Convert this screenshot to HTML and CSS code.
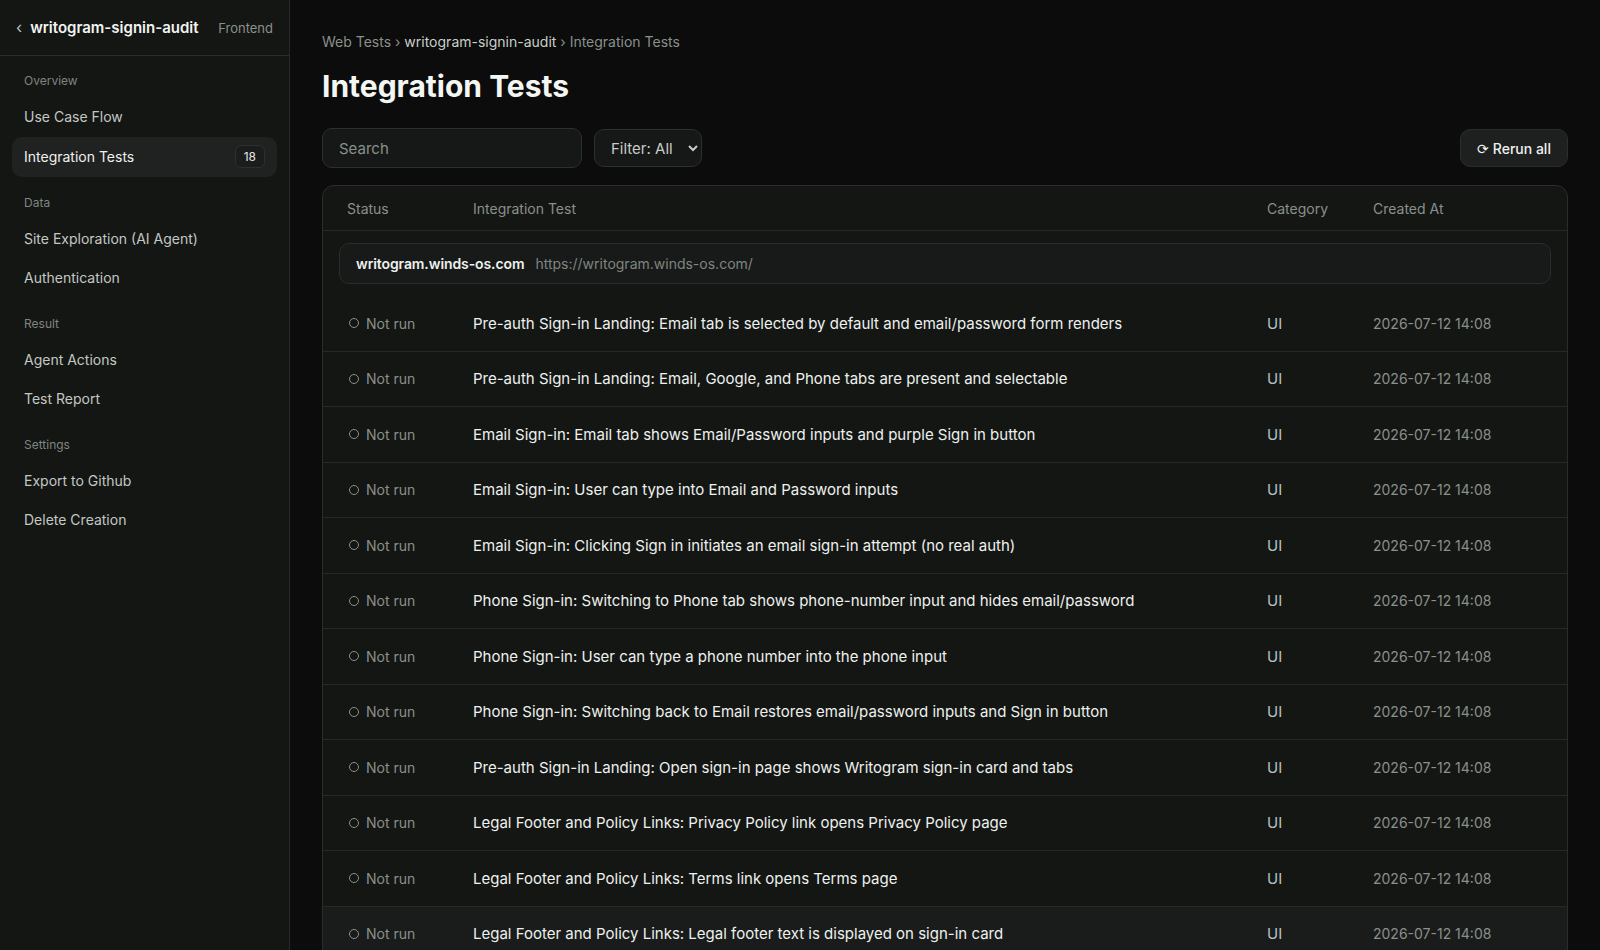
FILE: index.html
```html
<!DOCTYPE html>
<html lang="en">
<head>
  <meta charset="UTF-8">
  <meta name="viewport" content="width=device-width, initial-scale=1.0">
  <title>Integration Tests - writogram-signin-audit</title>
  <link rel="stylesheet" href="styles.css">
</head>
<body>
  <aside class="sidebar">
    <div class="sidebar-head">
      <span class="back">&#8249;</span>
      <span class="project">writogram-signin-audit</span>
      <span class="kind">Frontend</span>
    </div>
    <nav class="nav">
      <div class="nav-label">Overview</div>
      <a class="nav-item">Use Case Flow</a>
      <a class="nav-item active">Integration Tests <span class="badge">18</span></a>

      <div class="nav-label">Data</div>
      <a class="nav-item">Site Exploration (AI Agent)</a>
      <a class="nav-item">Authentication</a>

      <div class="nav-label">Result</div>
      <a class="nav-item">Agent Actions</a>
      <a class="nav-item">Test Report</a>

      <div class="nav-label">Settings</div>
      <a class="nav-item">Export to Github</a>
      <a class="nav-item">Delete Creation</a>
    </nav>
  </aside>

  <main class="main">
    <div class="crumbs">Web Tests › <span class="crumb-strong">writogram-signin-audit</span> › Integration Tests</div>
    <h1>Integration Tests</h1>

    <div class="toolbar">
      <input class="search" type="text" placeholder="Search">
      <select class="filter">
        <option>Filter: All</option>
        <option>Filter: Passed</option>
        <option>Filter: Failed</option>
        <option>Filter: Not run</option>
      </select>
      <button class="rerun">⟳ Rerun all</button>
    </div>

    <div class="table">
      <div class="row head">
        <div>Status</div>
        <div>Integration Test</div>
        <div>Category</div>
        <div>Created At</div>
      </div>

      <div class="site">
        <div class="site-box">
          <span class="site-name">writogram.winds-os.com</span>
          <span class="site-url">https://writogram.winds-os.com/</span>
        </div>
      </div>

      <div class="row">
        <div class="status"><i class="dot"></i>Not run</div>
        <div class="name">Pre-auth Sign-in Landing: Email tab is selected by default and email/password form renders</div>
        <div class="cat">UI</div>
        <div class="date">2026-07-12 14:08</div>
      </div>
      <div class="row">
        <div class="status"><i class="dot"></i>Not run</div>
        <div class="name">Pre-auth Sign-in Landing: Email, Google, and Phone tabs are present and selectable</div>
        <div class="cat">UI</div>
        <div class="date">2026-07-12 14:08</div>
      </div>
      <div class="row">
        <div class="status"><i class="dot"></i>Not run</div>
        <div class="name">Email Sign-in: Email tab shows Email/Password inputs and purple Sign in button</div>
        <div class="cat">UI</div>
        <div class="date">2026-07-12 14:08</div>
      </div>
      <div class="row">
        <div class="status"><i class="dot"></i>Not run</div>
        <div class="name">Email Sign-in: User can type into Email and Password inputs</div>
        <div class="cat">UI</div>
        <div class="date">2026-07-12 14:08</div>
      </div>
      <div class="row">
        <div class="status"><i class="dot"></i>Not run</div>
        <div class="name">Email Sign-in: Clicking Sign in initiates an email sign-in attempt (no real auth)</div>
        <div class="cat">UI</div>
        <div class="date">2026-07-12 14:08</div>
      </div>
      <div class="row">
        <div class="status"><i class="dot"></i>Not run</div>
        <div class="name">Phone Sign-in: Switching to Phone tab shows phone-number input and hides email/password</div>
        <div class="cat">UI</div>
        <div class="date">2026-07-12 14:08</div>
      </div>
      <div class="row">
        <div class="status"><i class="dot"></i>Not run</div>
        <div class="name">Phone Sign-in: User can type a phone number into the phone input</div>
        <div class="cat">UI</div>
        <div class="date">2026-07-12 14:08</div>
      </div>
      <div class="row">
        <div class="status"><i class="dot"></i>Not run</div>
        <div class="name">Phone Sign-in: Switching back to Email restores email/password inputs and Sign in button</div>
        <div class="cat">UI</div>
        <div class="date">2026-07-12 14:08</div>
      </div>
      <div class="row">
        <div class="status"><i class="dot"></i>Not run</div>
        <div class="name">Pre-auth Sign-in Landing: Open sign-in page shows Writogram sign-in card and tabs</div>
        <div class="cat">UI</div>
        <div class="date">2026-07-12 14:08</div>
      </div>
      <div class="row">
        <div class="status"><i class="dot"></i>Not run</div>
        <div class="name">Legal Footer and Policy Links: Privacy Policy link opens Privacy Policy page</div>
        <div class="cat">UI</div>
        <div class="date">2026-07-12 14:08</div>
      </div>
      <div class="row">
        <div class="status"><i class="dot"></i>Not run</div>
        <div class="name">Legal Footer and Policy Links: Terms link opens Terms page</div>
        <div class="cat">UI</div>
        <div class="date">2026-07-12 14:08</div>
      </div>
      <div class="row hover">
        <div class="status"><i class="dot"></i>Not run</div>
        <div class="name">Legal Footer and Policy Links: Legal footer text is displayed on sign-in card</div>
        <div class="cat">UI</div>
        <div class="date">2026-07-12 14:08</div>
      </div>
    </div>
  </main>
</body>
</html>
```

FILE: styles.css
```css
body {
  margin: 0;
  padding: 0;
  height: 100vh;
  overflow: hidden;
  display: flex;
  font-family: Inter, "Noto Sans", sans-serif;
  background-color: #0b0c0b;
  color: #e8ece9;
}

/* sidebar */

.sidebar {
  width: 289px;
  flex-shrink: 0;
  background-color: #141614;
  border-right: 1px solid #262926;
}

.sidebar-head {
  height: 55px;
  display: flex;
  align-items: center;
  padding: 0 16px 0 16px;
  border-bottom: 1px solid #2a2d2a;
}

.back {
  color: #b9c0bb;
  font-size: 16px;
  margin-right: 8px;
  margin-top: -2px;
}

.project {
  font-size: 15px;
  font-weight: 600;
  color: #f1f4f1;
  flex: 1;
}

.kind {
  font-size: 13px;
  color: #8a908b;
}

.nav {
  display: flex;
  flex-direction: column;
  padding: 0 12px;
}

.nav-label {
  font-size: 12px;
  line-height: 16px;
  color: #7f8580;
  padding-left: 12px;
  margin-top: 18px;
  margin-bottom: 8px;
}

.nav-label:first-child {
  margin-top: 17px;
}

.nav-item {
  display: flex;
  align-items: center;
  justify-content: space-between;
  height: 39.5px;
  padding: 0 12px;
  border-radius: 10px;
  font-size: 14px;
  color: #c2c8c3;
}

.nav-item.active {
  height: 40px;
  background-color: #1f2220;
  color: #eef1ee;
}

.badge {
  font-size: 12px;
  color: #e4e8e5;
  border: 1px solid #2d312e;
  border-radius: 6px;
  padding: 3px 8px;
  background-color: #1a1d1b;
}

/* main */

.main {
  flex: 1;
  padding: 32px 32px 0 32px;
  overflow: hidden;
}

.crumbs {
  font-size: 14px;
  line-height: 20px;
  color: #8a908b;
}

.crumb-strong {
  color: #c9cfca;
}

h1 {
  margin: 14px 0 22px;
  font-size: 30px;
  line-height: 40px;
  font-weight: 700;
  color: #f3f6f3;
}

.toolbar {
  display: flex;
  align-items: center;
  gap: 12px;
  margin-bottom: 17px;
}

.search {
  width: 260px;
  height: 40px;
  box-sizing: border-box;
  padding: 0 16px;
  font-family: inherit;
  font-size: 15px;
  color: #e8ece9;
  background-color: #151816;
  border: 1px solid #2c302d;
  border-radius: 10px;
  outline: none;
}

.search::placeholder {
  color: #8a908b;
}

.filter {
  width: 108px;
  height: 38px;
  padding: 0 8px 0 12px;
  font-family: inherit;
  font-size: 15px;
  color: #c6ccc7;
  background-color: #151816;
  border: 1px solid #2c302d;
  border-radius: 10px;
  color-scheme: dark;
}

.rerun {
  margin-left: auto;
  height: 38px;
  width: 108px;
  font-family: inherit;
  font-size: 14px;
  font-weight: 500;
  color: #eef1ee;
  background-color: #1d201e;
  border: 1px solid #2a2e2b;
  border-radius: 10px;
  cursor: pointer;
}

/* table */

.table {
  background-color: #141614;
  border: 1px solid #2a2d2a;
  border-radius: 12px;
  overflow: hidden;
}

.row {
  display: grid;
  grid-template-columns: 126px 1fr 106px 170px;
  align-items: center;
  height: 55.5px;
  box-sizing: border-box;
  padding: 0 24px;
  border-bottom: 1px solid #262a27;
  font-size: 15px;
}

.row.head {
  height: 45px;
  font-size: 14px;
  color: #8a908b;
}

.row.hover {
  background-color: #191c1a;
}

.site {
  padding: 12px 16px 12px;
}

.site-box {
  display: flex;
  align-items: center;
  gap: 11px;
  height: 41px;
  box-sizing: border-box;
  padding: 0 16px;
  border: 1px solid #2a2d2a;
  border-radius: 10px;
  background-color: #171a18;
}

.site-name {
  font-size: 14px;
  font-weight: 600;
  letter-spacing: -0.1px;
  color: #eef1ee;
}

.site-url {
  font-size: 14px;
  color: #7f8580;
}

.status {
  display: flex;
  align-items: center;
  font-size: 14px;
  color: #8a908b;
}

.dot {
  width: 8px;
  height: 8px;
  border: 1.5px solid #8a908b;
  border-radius: 50%;
  margin: 0 7px 0 2px;
}

.name {
  color: #eef1ee;
}

.cat {
  color: #b9c3c1;
}

.date {
  font-size: 14px;
  color: #8a908b;
}
```
